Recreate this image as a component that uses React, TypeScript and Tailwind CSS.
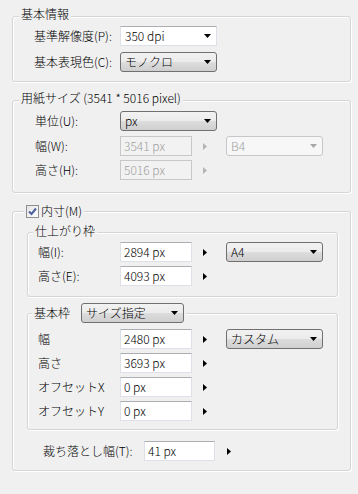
import clsx from "clsx";
import type { ReactNode } from "react";

function Arrow({ disabled }: { disabled?: boolean }) {
  return (
    <svg width="4" height="7" viewBox="0 0 4 7" className="shrink-0">
      <path d="M0 0L4 3.5L0 7Z" fill={disabled ? "#b4b4b4" : "#000"} />
    </svg>
  );
}

function DropArrow({ disabled }: { disabled?: boolean }) {
  return (
    <svg width="7" height="4" viewBox="0 0 7 4" className="ml-auto mr-[5px] shrink-0">
      <path d="M0 0H7L3.5 4Z" fill={disabled ? "#a8a8a8" : "#000"} />
    </svg>
  );
}

function TextBox({ value, disabled, className }: { value: string; disabled?: boolean; className?: string }) {
  return (
    <div
      className={clsx(
        "h-[20px] flex items-center pl-[3px] border shrink-0",
        disabled
          ? "bg-[#f2f2f2] border-[#c8c8c8] text-[#a0a0a0]"
          : "bg-white border-[#dde1e7] border-t-[#abadb3] text-black",
        className
      )}
    >
      {value}
    </div>
  );
}

type ComboKind = "edit" | "button" | "disabled";

function Combo({ value, kind, className }: { value: string; kind: ComboKind; className?: string }) {
  return (
    <div
      className={clsx(
        "h-[20px] flex items-center pl-[4px] border shrink-0",
        kind === "edit" && "bg-white border-[#dde1e7] border-t-[#abadb3]",
        kind === "button" &&
          "rounded-[3px] border-[#707070] bg-[linear-gradient(#f2f2f2,#ebebeb_50%,#dddddd_50%,#cfcfcf)]",
        kind === "disabled" && "rounded-[3px] border-[#c5c8cb] bg-[#f7f7f7] text-[#a0a0a0]",
        className
      )}
    >
      <span>{value}</span>
      <DropArrow disabled={kind === "disabled"} />
    </div>
  );
}

function Row({ label, labelClass, children }: { label: string; labelClass: string; children?: ReactNode }) {
  return (
    <div className="flex items-center h-[20px]">
      <span className={clsx("shrink-0", labelClass)}>{label}</span>
      {children}
    </div>
  );
}

const frame =
  "border border-[#d5d5d5] rounded-[3px] shadow-[inset_1px_1px_0_#ffffff,1px_1px_0_#ffffff]";

function Checkbox() {
  return (
    <div className="w-[13px] h-[13px] border border-[#8f8f8f] bg-[linear-gradient(135deg,#e4e4e4,#ffffff)] flex items-center justify-center shrink-0">
      <svg width="9" height="9" viewBox="0 0 9 9">
        <path d="M1 4.5L3.5 7L8 1.5" stroke="#4d61a0" strokeWidth="2" fill="none" />
      </svg>
    </div>
  );
}

export default function App() {
  return (
    <div className="w-[358px] h-[494px] bg-[#f0f0f0] pl-[12px] pr-[7px] pt-[7px] text-[12px] leading-[14px] font-light text-black font-['Noto_Sans_CJK_JP',sans-serif] overflow-hidden">
      {/* 基本情報 */}
      <fieldset className={frame}>
        <legend className="ml-[6px] px-[2px] pb-[4px] bg-[#f0f0f0]">基本情報</legend>
        <div className="pl-[21px] pt-[1px] pb-[9px] flex flex-col gap-[6px]">
          <Row label="基準解像度(P):" labelClass="w-[86px]">
            <Combo value="350 dpi" kind="edit" className="w-[97px]" />
          </Row>
          <Row label="基本表現色(C):" labelClass="w-[86px]">
            <Combo value="モノクロ" kind="button" className="w-[97px]" />
          </Row>
        </div>
      </fieldset>

      {/* 用紙サイズ */}
      <fieldset className={clsx(frame, "mt-[9px]")}>
        <legend className="ml-[6px] px-[2px] pb-[4px] bg-[#f0f0f0]">用紙サイズ (3541 * 5016 pixel)</legend>
        <div className="pl-[22px] pt-[2px] pb-[12px] flex flex-col">
          <Row label="単位(U):" labelClass="w-[85px]">
            <Combo value="px" kind="button" className="w-[97px]" />
          </Row>
          <div className="mt-[5px]">
            <Row label="幅(W):" labelClass="w-[85px]">
              <TextBox value="3541 px" disabled className="w-[72px]" />
              <span className="ml-[11px]">
                <Arrow disabled />
              </span>
              <Combo value="B4" kind="disabled" className="ml-[19px] w-[97px]" />
            </Row>
          </div>
          <div className="mt-[4px]">
            <Row label="高さ(H):" labelClass="w-[85px]">
              <TextBox value="5016 px" disabled className="w-[72px]" />
              <span className="ml-[11px]">
                <Arrow disabled />
              </span>
            </Row>
          </div>
        </div>
      </fieldset>

      {/* 内寸 */}
      <fieldset className={clsx(frame, "mt-[10px]")}>
        <legend className="ml-[11px] px-[2px] bg-[#f0f0f0] flex items-center gap-[2px] h-[16px]">
          <Checkbox />
          <span>内寸(M)</span>
        </legend>

        <div className="pl-[14px] pr-[12px] pt-[5px] pb-[9px] flex flex-col">
          {/* 仕上がり枠 */}
          <fieldset className={frame}>
            <legend className="ml-[5px] px-[2px] pb-[2px] bg-[#f0f0f0]">仕上がり枠</legend>
            <div className="pl-[10px] pt-[2px] pb-[10px] flex flex-col gap-[4px]">
              <Row label="幅(I):" labelClass="w-[82px]">
                <TextBox value="2894 px" className="w-[72px]" />
                <span className="ml-[11px]">
                  <Arrow />
                </span>
                <Combo value="A4" kind="button" className="ml-[19px] w-[97px]" />
              </Row>
              <Row label="高さ(E):" labelClass="w-[82px]">
                <TextBox value="4093 px" className="w-[72px]" />
                <span className="ml-[11px]">
                  <Arrow />
                </span>
              </Row>
            </div>
          </fieldset>

          {/* 基本枠 */}
          <fieldset className={clsx(frame, "mt-[6px]")}>
            <legend className="ml-[4px] px-[2px] bg-[#f0f0f0] flex items-center gap-[11px]">
              <span>基本枠</span>
              <Combo value="サイズ指定" kind="button" className="w-[103px]" />
            </legend>
            <div className="pl-[10px] pt-[6px] pb-[8px] flex flex-col gap-[4px]">
              <Row label="幅" labelClass="w-[82px]">
                <TextBox value="2480 px" className="w-[72px]" />
                <span className="ml-[11px]">
                  <Arrow />
                </span>
                <Combo value="カスタム" kind="button" className="ml-[19px] w-[97px]" />
              </Row>
              <Row label="高さ" labelClass="w-[82px]">
                <TextBox value="3693 px" className="w-[72px]" />
                <span className="ml-[11px]">
                  <Arrow />
                </span>
              </Row>
              <Row label="オフセットX" labelClass="w-[82px]">
                <TextBox value="0 px" className="w-[72px]" />
                <span className="ml-[11px]">
                  <Arrow />
                </span>
              </Row>
              <Row label="オフセットY" labelClass="w-[82px]">
                <TextBox value="0 px" className="w-[72px]" />
                <span className="ml-[11px]">
                  <Arrow />
                </span>
              </Row>
            </div>
          </fieldset>

          {/* 裁ち落とし幅 */}
          <div className="mt-[11px] pl-[16px]">
            <Row label="裁ち落とし幅(T):" labelClass="w-[101px]">
              <TextBox value="41 px" className="w-[71px]" />
              <span className="ml-[12px]">
                <Arrow />
              </span>
            </Row>
          </div>
        </div>
      </fieldset>
    </div>
  );
}
